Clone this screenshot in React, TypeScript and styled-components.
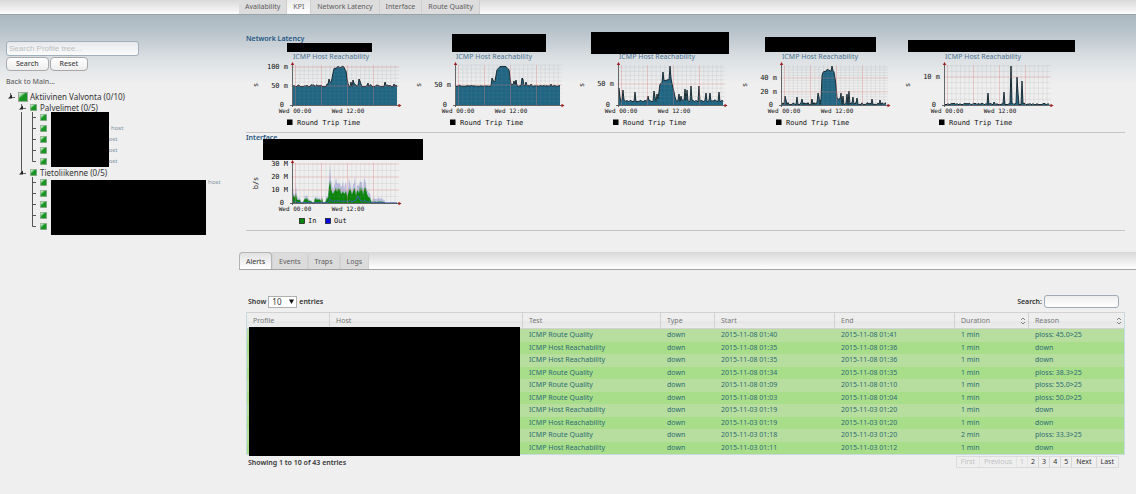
import React from 'react';
import styled, { createGlobalStyle } from 'styled-components';

const sans = `'Noto Sans', 'Open Sans', sans-serif`;

const GlobalStyle = createGlobalStyle`
  * { box-sizing: border-box; }
  html { min-height: 100%; background: #efefef; }
  body { margin: 0; font: 7px/11px ${sans}; color: #333; }
  button, input, select { font: inherit; }
  a { color: inherit; text-decoration: none; }
`;

const Page = styled.div`
  background: linear-gradient(#a9b7bf 14px, #b9c4cb 32px, #dde1e4 60px, #efefef 84px);
`;

const TopBar = styled.header`
  display: flex;
  height: 15px;
  padding-left: 239px;
  background: linear-gradient(#d9d9d9, #fcfcfc);
  border-bottom: 1px solid #98a3aa;
`;

const TopTab = styled.button<{ $active?: boolean }>`
  padding: 0 6px;
  border: 0;
  border-right: 1px solid #cfcfcf;
  background: ${p => (p.$active ? 'linear-gradient(#ececec, #ffffff)' : '#dddddd')};
  color: #5c5c5c;
  font-size: 7px;
  line-height: 14px;
  white-space: nowrap;
`;

const Columns = styled.div`
  display: flex;
  align-items: flex-start;
`;

const Sidebar = styled.aside`
  flex: 0 0 238px;
  padding: 26px 0 0 6px;
`;

const TreeSearch = styled.input`
  display: block;
  width: 133px;
  height: 15px;
  padding: 0 2px;
  border: 1px solid #9fb0bc;
  border-radius: 3px;
  background: linear-gradient(#e6e9eb, #fbfbfb);
  font: 8px 'Liberation Sans', sans-serif;
  &::placeholder { color: #bcbfc1; opacity: 1; }
`;

const Buttons = styled.div`
  display: flex;
  gap: 1px;
  margin: 1px 0 6px;
`;

const Button = styled.button`
  height: 14px;
  padding: 0 9px;
  border: 1px solid #a9a9ac;
  border-radius: 4px;
  background: linear-gradient(#ffffff, #ededee);
  color: #444;
  font-size: 7px;
  font-weight: 500;
  line-height: 12px;
`;

const BackLink = styled.a`
  display: block;
  color: #666;
  font-weight: 500;
  line-height: 10px;
`;

const Tree = styled.ul`
  margin: 4px 0 0;
  padding: 0;
  list-style: none;
`;

const SubTree = styled.ul`
  position: relative;
  margin: 0;
  padding: 0;
  list-style: none;
`;

const Node = styled.div<{ $kind: 'root' | 'group' | 'leaf' }>`
  display: flex;
  align-items: center;
  height: ${p => (p.$kind === 'group' ? 10 : 11)}px;
  padding-left: ${p => (p.$kind === 'root' ? 2 : p.$kind === 'group' ? 13 : 24)}px;
  gap: ${p => (p.$kind === 'leaf' ? 4 : p.$kind === 'group' ? 3 : 2)}px;
  color: #333;
  font-size: 8px;
  white-space: nowrap;
`;

const Suffix = styled.small<{ $inset: number }>`
  padding-left: ${p => p.$inset}px;
  color: #8094a4;
  font-size: 6px;
`;

const TreeMask = styled.div<{ $width: number; $drop: number }>`
  position: absolute;
  top: ${p => p.$drop}px;
  bottom: ${p => -p.$drop}px;
  left: 45px;
  width: ${p => p.$width}px;
  background: #000;
`;

const Main = styled.main`
  flex: 1;
  min-width: 0;
`;

const Panels = styled.div`
  padding: 17px 11px 0 8px;
`;

const Section = styled.section`
  display: grid;
  border-bottom: 1px solid #c3c5c6;
  & > * { grid-area: 1 / 1; }
`;

const Heading = styled.h2<{ $first?: boolean }>`
  margin: 0;
  color: #1f5682;
  font-size: 7px;
  font-weight: 600;
  line-height: ${p => (p.$first ? 13 : 9)}px;
`;

const Charts = styled.div`
  display: flex;
`;

const Figure = styled.figure`
  flex: 0 0 163px;
  margin: 0;
`;

const MaskSlot = styled.div<{ $height: number; $top: number }>`
  position: relative;
  height: ${p => p.$height}px;
  padding-top: ${p => p.$top}px;
`;

const Mask = styled.div<{ $left: number; $width: number; $height: number }>`
  width: ${p => p.$width}px;
  height: ${p => p.$height}px;
  margin-left: ${p => p.$left}px;
  background: #000;
`;

const Caption = styled.figcaption`
  padding-left: 47px;
  color: #4d7290;
  font-size: 7px;
  line-height: 10px;
  white-space: nowrap;
`;

const Drawing = styled.svg`
  display: block;
  font-family: 'DejaVu Sans Mono', monospace;
  font-size: 7px;
  fill: #111;
`;

const AlertTabs = styled.nav`
  display: flex;
  height: 18px;
  margin: 21px 0 0 1px;
  border-bottom: 1px solid #a2a2a2;
  border-radius: 4px 0 0 0;
  background: linear-gradient(#d8d8d8, #ffffff);
`;

const AlertTab = styled.button<{ $active?: boolean }>`
  padding: 0 6px;
  border: 1px solid ${p => (p.$active ? '#b4b4b4' : '#d2d2d2')};
  border-bottom: 0;
  border-radius: 4px 4px 0 0;
  background: ${p => (p.$active ? 'linear-gradient(#e2e2e2, #ffffff)' : '#dcdcdc')};
  color: ${p => (p.$active ? '#333' : '#5c5c5c')};
  line-height: 17px;
`;

const Alerts = styled.div`
  padding: 25px 11px 0 8px;
`;

const Bar = styled.div`
  display: flex;
  align-items: center;
  justify-content: space-between;
  padding: 0 6px 0 2px;
  font-weight: 600;
`;

const Field = styled.label`
  display: flex;
  align-items: center;
  gap: 2px;
  height: 13px;
`;

const SelectBox = styled.span`
  display: grid;
  align-items: center;
  & > * { grid-area: 1 / 1; }
  & > svg { justify-self: end; margin-right: 3px; pointer-events: none; }
`;

const Select = styled.select`
  appearance: none;
  width: 29px;
  height: 12px;
  padding: 0 3px;
  border: 1px solid #b0b0b0;
  border-radius: 0;
  background: #fff;
  color: #333;
  font-weight: 400;
  font-size: 8px;
  line-height: 10px;
`;

const SearchBox = styled.input`
  width: 75px;
  height: 13px;
  border: 1px solid #a0abb8;
  border-radius: 3px;
  background: linear-gradient(#eeeeee, #ffffff);
`;

const TableWrap = styled.div`
  position: relative;
  margin-top: 4px;
`;

const Table = styled.table`
  width: 100%;
  height: 143px;
  table-layout: fixed;
  border-collapse: separate;
  border-spacing: 0;
  border: 1px solid #c4dbe2;
  border-top-color: #d2d2d2;
  line-height: 10px;
`;

const Th = styled.th`
  height: 16px;
  padding: 0 6px;
  border-right: 1px solid #d2d2d2;
  border-bottom: 1px solid #d2d2d2;
  background: linear-gradient(#eeeeee 50%, #e6e6e6 50%, #ececec);
  color: #777;
  font-weight: 400;
  text-align: left;
  &:last-child { border-right: 0; }
`;

const HeadCell = styled.span`
  display: flex;
  align-items: center;
  justify-content: space-between;
  margin-right: -4px;
`;

const Row = styled.tr`
  background: #a8de8a;
  color: #2e6c72;
  &:nth-child(odd) { background: #b7de9f; }
`;

const Td = styled.td`
  padding: 0 6px;
  white-space: nowrap;
`;

const TableMask = styled.div`
  position: absolute;
  top: 15px;
  bottom: -1px;
  left: 3px;
  width: 271px;
  background: #000;
`;

const Pager = styled.nav`
  display: flex;
  border: 1px solid #dcdcdc;
`;

const PageButton = styled.button<{ $number: boolean }>`
  height: 10px;
  padding: 0 ${p => (p.$number ? 3 : 4)}px;
  border: 0;
  border-right: 1px solid #d6d6d6;
  background: #efefef;
  color: #333;
  font-weight: 400;
  line-height: 10px;
  &:last-child { border-right: 0; }
  &:disabled { color: #c2c2c2; border-color: #e4e4e4; }
`;

const Footer = styled(Bar)`
  margin-top: 1px;
  padding-bottom: 24px;
`;

const Picture = ({ size }: { size: number }) => (
  <svg width={size} height={size} viewBox="0 0 10 10">
    <rect x=".5" y=".5" width="9" height="9" fill="#1f9a2b" stroke="#9aa89b" />
    <path d="M1 1H7L1 6Z" fill="#8fcf92" />
    <path d="M1 1H4.5L1 4Z" fill="#c9e4ca" />
    <path d="M9 1V9H2Z" fill="#108a1c" opacity=".4" />
  </svg>
);

const Expander = ({ above }: { above?: boolean }) => (
  <svg width="8" height="11" viewBox="0 0 8 11">
    {above && <path d="M2.5 0V6" stroke="#555" />}
    <path d="M2.5 2V6.5H7" stroke="#666" fill="none" />
    <path d="M4 3.5V7.5H0Z" fill="#222" />
  </svg>
);

const Branch = ({ last }: { last?: boolean }) => (
  <svg width="6" height="11" viewBox="0 0 6 11">
    <path d={last ? 'M2.5 0V5.5H6' : 'M2.5 0V11M2.5 5.5H6'} stroke="#555" fill="none" />
  </svg>
);

const Trunk = styled.div`
  position: absolute;
  top: 0;
  bottom: 0;
  left: 15px;
  width: 1px;
  background: #555;
`;

interface LeavesProps { suffixes: (number | null)[]; width: number; drop: number; trunk?: boolean }

function Leaves({ suffixes, width, drop, trunk }: LeavesProps) {
  return (
    <SubTree>
      {trunk && <Trunk />}
      {suffixes.map((inset, i) => (
        <li key={i}>
          <Node $kind="leaf">
            <Branch last={i === suffixes.length - 1} />
            <Picture size={7} />
            {inset !== null && <Suffix $inset={inset}>host</Suffix>}
          </Node>
        </li>
      ))}
      <TreeMask $width={width} $drop={drop} />
    </SubTree>
  );
}

type Point = [number, number];

// Repeatable jitter, so that each series keeps its outline between renders.
const noise = (i: number, seed: number) => {
  const v = Math.sin(i * 12.9898 + seed * 78.233) * 43758.5453;
  return v - Math.floor(v);
};

// Heights in pixels above the base line, one for each pixel of the 104 px time axis.
function series(base: number, jitter: number, seed: number, shape: Point[], spikes: Point[]) {
  const out: number[] = [];
  for (let x = 0; x <= 104; x++) {
    const n = noise(x, seed);
    let y = base + (n > 0.6 ? n * jitter : 0);
    for (let k = 0; k < shape.length - 1; k++) {
      const [x0, y0] = shape[k];
      const [x1, y1] = shape[k + 1];
      if (x >= x0 && x <= x1) y = y0 + ((y1 - y0) * (x - x0)) / (x1 - x0) + n * Math.min(jitter, 2);
    }
    out.push(y);
  }
  spikes.forEach(([x, y]) => { out[x] = y; });
  return out;
}

const line = (values: number[], base: number) =>
  values.map((v, i) => `${i ? 'L' : 'M'}${47 + i} ${(base - v).toFixed(1)}`).join('');
const area = (values: number[], base: number) => `${line(values, base)}L151 ${base}L47 ${base}Z`;

interface Tick { label: string; up: number }

function Grid({ base, step, ticks, unit }: { base: number; step: number; ticks: Tick[]; unit: string }) {
  const rows = Math.floor(40 / step);
  return (
    <>
      <g stroke="#8c8c8c" strokeOpacity=".22" strokeWidth=".6">
        {Array.from({ length: 24 }, (_, i) => (
          <path key={i} d={`M${49.5 + i * 4.33} ${base - 40}V${base}`} />
        ))}
        {Array.from({ length: rows }, (_, i) => (
          <path key={i} d={`M47 ${base - (i + 1) * step}H153`} />
        ))}
      </g>
      <g stroke="#f08080" strokeOpacity=".35" strokeWidth=".8">
        {[49.5, 75.5, 101.5, 127.5].map(x => (
          <path key={x} d={`M${x} ${base - 40}V${base + 1}`} />
        ))}
        {ticks.map(t => (
          <path key={t.label} d={`M45 ${base - t.up}H153`} />
        ))}
      </g>
      <path d={`M46.5 ${base - 40}V${base + 2}M44 ${base + 0.5}H154`} stroke="#444" strokeWidth=".8" />
      <path d={`M44.8 ${base - 40}L46.5 ${base - 43}L48.2 ${base - 40}Z`} fill="#a01818" />
      <path d={`M152.5 ${base - 1.3}L155.5 ${base + 0.5}L152.5 ${base + 2.3}Z`} fill="#a01818" />
      {ticks.map(t => (
        <text key={t.label} x="42" y={base - t.up + 2} textAnchor="end">{t.label}</text>
      ))}
      <text x="38" y={base + 2} textAnchor="end">0</text>
      <text transform={`translate(12 ${base - 20}) rotate(-90)`} textAnchor="middle">{unit}</text>
      <g fontSize="6">
        <text x="49" y={base + 8} textAnchor="middle">Wed 00:00</text>
        <text x="102" y={base + 8} textAnchor="middle">Wed 12:00</text>
      </g>
    </>
  );
}

interface Latency {
  mask: { top: number; left: number; width: number; height: number };
  ticks: Tick[];
  step: number;
  values: number[];
}

const latency: Latency[] = [
  {
    mask: { top: 11, left: 41, width: 85, height: 9 },
    ticks: [{ label: '100 m', up: 38 }, { label: '50 m', up: 19 }],
    step: 3.8,
    values: series(18.5, 1.8, 1, [[34, 20], [38, 22], [41, 35], [44, 37], [51, 37], [53, 33], [55, 20]],
      [[36, 26], [37, 23], [58, 23], [60, 25], [61, 22], [66, 26], [67, 24], [68, 21], [75, 22], [92, 23], [101, 21]]),
  },
  {
    mask: { top: 2, left: 43, width: 94, height: 18 },
    ticks: [{ label: '50 m', up: 20 }],
    step: 4,
    values: series(18.8, 0.7, 2, [[36, 20], [39, 24], [41, 35], [44, 38], [50, 38], [53, 35], [55, 20], [60, 20]],
      [[3, 20], [36, 27], [37, 25], [58, 24], [60, 25], [66, 27], [67, 26], [70, 23], [75, 21], [95, 21]]),
  },
  {
    mask: { top: 0, left: 19, width: 138, height: 22 },
    ticks: [{ label: '50 m', up: 21 }],
    step: 4.2,
    values: series(3.5, 1.5, 3, [[39, 6], [41, 20], [44, 24], [46, 24], [52, 25], [55, 12], [57, 4]],
      [[0, 17], [1, 8], [4, 15], [16, 13], [29, 9], [35, 14], [36, 8], [38, 11], [44, 33], [51, 39], [52, 27], [60, 11], [62, 9], [66, 16], [68, 15], [72, 19], [80, 19], [87, 12], [91, 12], [100, 13]]),
  },
  {
    mask: { top: 5, left: 30, width: 111, height: 15 },
    ticks: [{ label: '40 m', up: 27 }, { label: '20 m', up: 13 }],
    step: 2.7,
    values: series(0.6, 1.8, 4, [[39, 6], [40, 28], [41, 32], [45, 34], [52, 33], [54, 20], [55, 6], [59, 4]],
      [[3, 9], [4, 5], [15, 8], [20, 6], [30, 6], [36, 12], [37, 8], [50, 39], [59, 12], [61, 9], [65, 11], [67, 14], [71, 8], [75, 7], [90, 6], [98, 5]]),
  },
  {
    mask: { top: 8, left: 10, width: 167, height: 12 },
    ticks: [{ label: '10 m', up: 28 }],
    step: 5.6,
    values: series(0.5, 1.2, 5, [], [[43, 12], [49, 3], [59, 13], [66, 39], [72, 28], [73, 12], [77, 24]]),
  },
];

const traffic = Array.from({ length: 105 }, (_, i) => {
  const n = noise(i, 9);
  if (i < 5) return 5 + n * 11;
  if (i < 37) return i % 11 > 7 ? 1 : 2 + n * 6;
  if (i < 74) return 10 + n * 11;
  if (i < 78) return 6 + n * 8;
  if (i < 92) return 1 + n * 6;
  return n;
});
([[3, 19], [36, 22], [37, 39], [38, 22], [43, 26], [50, 22], [56, 25], [62, 27], [67, 22], [71, 25], [72, 23]] as Point[])
  .forEach(([x, y]) => { traffic[x] = y; });
const inbound = traffic.map((v, i) => (i > 78 ? v * 0.3 : v * (0.5 + noise(i, 4) * 0.3)));
const outbound = traffic.map((v, i) => (i > 62 && i < 68 ? 7 - Math.abs(65 - i) * 2 : v * 0.1));

function LatencyChart({ mask, ticks, step, values }: Latency) {
  return (
    <Figure>
      <MaskSlot $height={20} $top={mask.top}>
        <Mask $left={mask.left} $width={mask.width} $height={mask.height} />
      </MaskSlot>
      <Caption><a href="#chart">ICMP Host Reachability</a></Caption>
      <Drawing width="163" height="70" viewBox="0 0 163 70">
        <path d={area(values, 43)} fill="#1f6684" />
        <path d={line(values, 43)} fill="none" stroke="#0c1c24" strokeWidth=".9" />
        <Grid base={43} step={step} ticks={ticks} unit="s" />
        <rect x="41" y="57.5" width="5.5" height="5.5" fill="#000" />
        <text x="51" y="63">Round Trip Time</text>
      </Drawing>
    </Figure>
  );
}

function TrafficChart() {
  const ticks = [{ label: '30 M', up: 39 }, { label: '20 M', up: 26 }, { label: '10 M', up: 13 }];
  return (
    <Figure>
      <MaskSlot $height={27} $top={6}>
        <Mask $left={17} $width={160} $height={21} />
      </MaskSlot>
      <Drawing width="163" height="70" viewBox="0 0 163 70">
        <path d={area(traffic, 43)} fill="#b9bddc" />
        <path d={area(inbound, 43)} fill="#0a850a" />
        <path d={line(outbound, 43)} fill="none" stroke="#3f55c8" strokeWidth=".8" />
        <Grid base={43} step={6.5} ticks={ticks} unit="b/s" />
        <rect x="53.5" y="58.5" width="5" height="5" fill="#0a850a" stroke="#111" strokeWidth=".7" />
        <text x="62" y="63">In</text>
        <rect x="79.5" y="58.5" width="5" height="5" fill="#0808e0" stroke="#111" strokeWidth=".7" />
        <text x="88" y="63">Out</text>
      </Drawing>
    </Figure>
  );
}

const SortIcon = () => (
  <svg width="6" height="8" viewBox="0 0 6 8" fill="none" stroke="#777" strokeWidth=".9">
    <path d="M1 3L3 1L5 3M1 5L3 7L5 5" />
  </svg>
);

const columns: [string, number][] = [
  ['Profile', 83], ['Host', 193], ['Test', 138], ['Type', 54], ['Start', 120], ['End', 120], ['Duration', 74], ['Reason', 95],
];

const quality = 'ICMP Route Quality';
const reach = 'ICMP Host Reachability';
const rows = [
  [quality, '2015-11-08 01:40', '2015-11-08 01:41', '1 min', 'ploss: 45.0>25'],
  [reach, '2015-11-08 01:35', '2015-11-08 01:36', '1 min', 'down'],
  [reach, '2015-11-08 01:35', '2015-11-08 01:36', '1 min', 'down'],
  [quality, '2015-11-08 01:34', '2015-11-08 01:35', '1 min', 'ploss: 38.3>25'],
  [quality, '2015-11-08 01:09', '2015-11-08 01:10', '1 min', 'ploss: 55.0>25'],
  [quality, '2015-11-08 01:03', '2015-11-08 01:04', '1 min', 'ploss: 50.0>25'],
  [reach, '2015-11-03 01:19', '2015-11-03 01:20', '1 min', 'down'],
  [reach, '2015-11-03 01:19', '2015-11-03 01:20', '1 min', 'down'],
  [quality, '2015-11-03 01:18', '2015-11-03 01:20', '2 min', 'ploss: 33.3>25'],
  [reach, '2015-11-03 01:11', '2015-11-03 01:12', '1 min', 'down'],
];

export default function App() {
  return (
    <Page>
      <GlobalStyle />
      <TopBar>
        {['Availability', 'KPI', 'Network Latency', 'Interface', 'Route Quality'].map(t => (
          <TopTab key={t} $active={t === 'KPI'}>{t}</TopTab>
        ))}
      </TopBar>
      <Columns>
        <Sidebar>
          <TreeSearch aria-label="Search Profile tree" placeholder="Search Profile tree..." />
          <Buttons>
            <Button>Search</Button>
            <Button>Reset</Button>
          </Buttons>
          <BackLink href="#main">Back to Main...</BackLink>
          <Tree>
            <li>
              <Node $kind="root"><Expander /><Picture size={10} />Aktiivinen Valvonta (0/10)</Node>
              <SubTree>
                <li>
                  <Node $kind="group"><Expander /><Picture size={7} />Palvelimet (0/5)</Node>
                  <Leaves trunk width={58} drop={0} suffixes={[null, 60, 54, 54, 54]} />
                </li>
                <li>
                  <Node $kind="group"><Expander above /><Picture size={7} />Tietoliikenne (0/5)</Node>
                  <Leaves width={155} drop={3} suffixes={[157, null, null, null, null]} />
                </li>
              </SubTree>
            </li>
          </Tree>
        </Sidebar>
        <Main>
          <Panels>
            <Section>
              <Heading $first>Network Latency</Heading>
              <Charts>
                {latency.map((c, i) => <LatencyChart key={i} {...c} />)}
              </Charts>
            </Section>
            <Section>
              <Heading>Interface</Heading>
              <Charts><TrafficChart /></Charts>
            </Section>
          </Panels>
          <AlertTabs>
            {['Alerts', 'Events', 'Traps', 'Logs'].map(t => (
              <AlertTab key={t} $active={t === 'Alerts'}>{t}</AlertTab>
            ))}
          </AlertTabs>
          <Alerts>
            <Bar>
              <Field>
                Show
                <SelectBox>
                  <Select defaultValue="10"><option>10</option><option>25</option></Select>
                  <svg width="5" height="5" viewBox="0 0 5 5"><path d="M0 .5H5L2.5 5Z" fill="#111" /></svg>
                </SelectBox>
                entries
              </Field>
              <Field>Search: <SearchBox /></Field>
            </Bar>
            <TableWrap>
              <Table>
                <colgroup>
                  {columns.map(([name, width]) => <col key={name} width={width} />)}
                </colgroup>
                <thead>
                  <tr>
                    {columns.map(([name]) => (
                      <Th key={name}>
                        <HeadCell>{name}{(name === 'Duration' || name === 'Reason') && <SortIcon />}</HeadCell>
                      </Th>
                    ))}
                  </tr>
                </thead>
                <tbody>
                  {rows.map(([test, start, end, duration, reason], i) => (
                    <Row key={i}>
                      <Td /><Td /><Td>{test}</Td><Td>down</Td><Td>{start}</Td><Td>{end}</Td><Td>{duration}</Td><Td>{reason}</Td>
                    </Row>
                  ))}
                </tbody>
              </Table>
              <TableMask />
            </TableWrap>
            <Footer>
              <span>Showing 1 to 10 of 43 entries</span>
              <Pager aria-label="Pages">
                {['First', 'Previous', '1', '2', '3', '4', '5', 'Next', 'Last'].map((p, i) => (
                  <PageButton key={p} $number={p.length === 1} disabled={i < 3}>{p}</PageButton>
                ))}
              </Pager>
            </Footer>
          </Alerts>
        </Main>
      </Columns>
    </Page>
  );
}
